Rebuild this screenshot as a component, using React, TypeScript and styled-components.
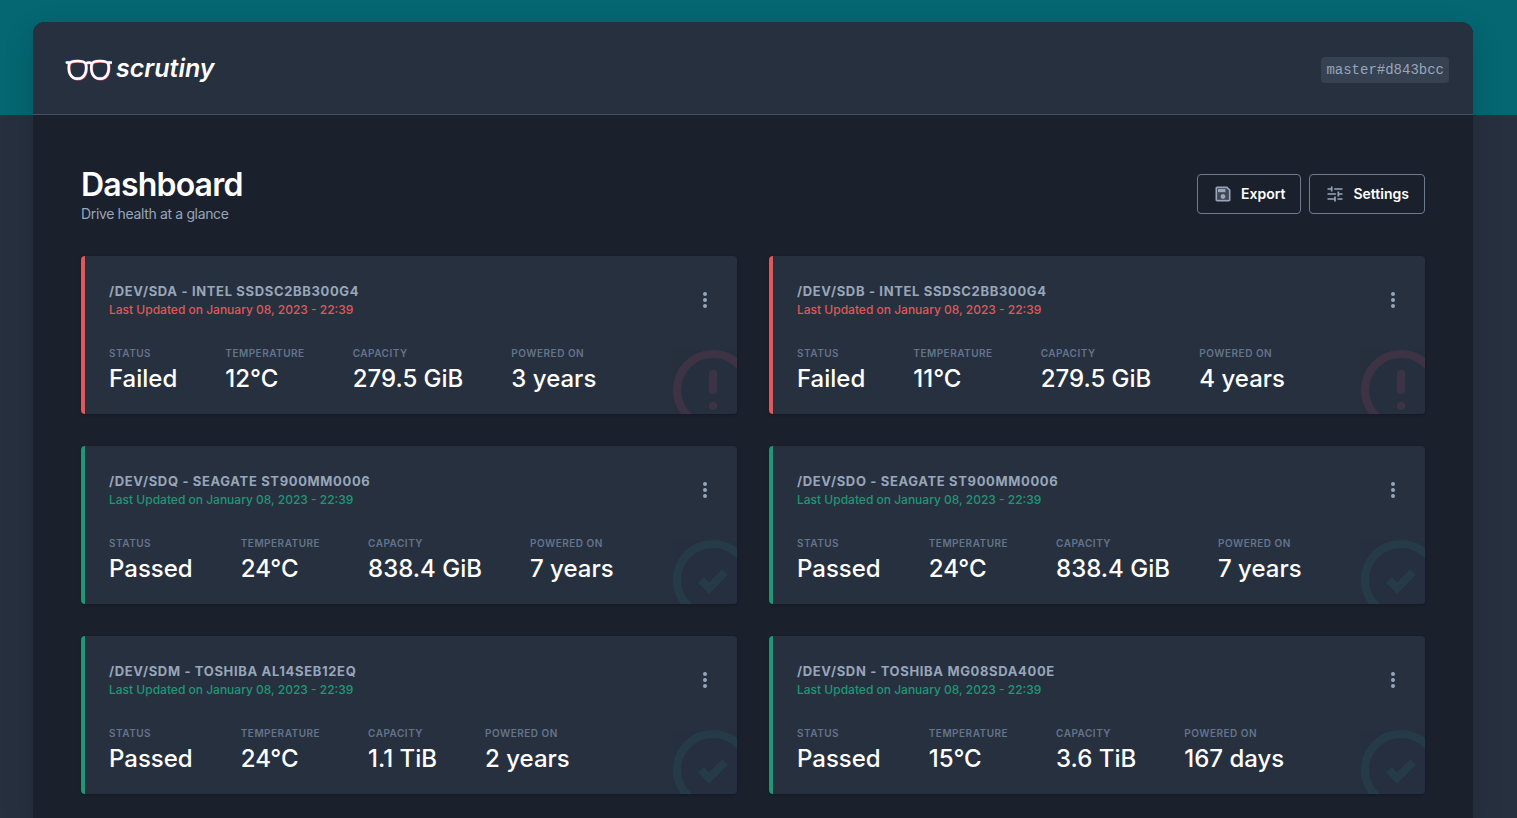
import React from "react";
import styled, { createGlobalStyle } from "styled-components";

const GlobalStyle = createGlobalStyle`
  *, *::before, *::after { box-sizing: border-box; }
  body {
    margin: 0;
    background: #27303f;
    color: #ffffff;
    font-family: Inter, "Liberation Sans", sans-serif;
    font-size: 14px;
    line-height: 20px;
  }
  h1, h2, p, dl, dt, dd { margin: 0; }
`;

const Page = styled.div`
  min-height: 100vh;
  padding: 22px 44px 0 33px;
  background: linear-gradient(#046772, #046772) top / 100% 115px no-repeat;
`;

const Shell = styled.div`
  display: flex;
  flex-direction: column;
  min-height: calc(100vh - 22px);
  border-radius: 12px 12px 0 0;
  background: #1a202c;
  box-shadow: 0 10px 30px rgba(0, 0, 0, 0.15);
`;

const TopBar = styled.header`
  display: flex;
  align-items: center;
  justify-content: space-between;
  height: 93px;
  padding: 0 24px 0 32px;
  border-bottom: 1px solid #475162;
  border-radius: 12px 12px 0 0;
  background: #27303f;
`;

const Brand = styled.a`
  display: flex;
  align-items: center;
  gap: 4px;
  color: #ffffff;
  font-size: 25px;
  font-style: italic;
  font-weight: 600;
  line-height: 32px;
  text-decoration: none;
`;

const Version = styled.code`
  margin-top: 4px;
  padding: 3px 5px;
  border-radius: 4px;
  background: #364152;
  color: #97a6ba;
  font-family: "Liberation Mono", monospace;
  font-size: 14px;
  line-height: 20px;
`;

const Main = styled.main`
  display: flex;
  flex-direction: column;
  gap: 32px;
  padding: 49px 48px 24px;
`;

const Heading = styled.div`
  display: flex;
  align-items: center;
  justify-content: space-between;
`;

const TitleBlock = styled.div`
  padding-top: 2px;
  letter-spacing: -0.025em;
`;

const Title = styled.h1`
  font-size: 32px;
  font-weight: 600;
  letter-spacing: -0.025em;
  line-height: 38px;
`;

const Subtitle = styled.p`
  color: #97a6ba;
`;

const Actions = styled.div`
  display: flex;
  gap: 8px;
`;

const ActionButton = styled.button`
  display: flex;
  align-items: center;
  gap: 8px;
  height: 40px;
  padding: 0 15px;
  border: 1px solid #6f7b8d;
  border-radius: 4px;
  background: transparent;
  color: #ffffff;
  font: 600 14px/20px Inter, sans-serif;

  svg { color: #97a6ba; }
`;

const Grid = styled.section`
  display: grid;
  grid-template-columns: repeat(2, minmax(0, 1fr));
  gap: 32px;
`;

const Card = styled.article<{ $failed: boolean }>`
  position: relative;
  overflow: hidden;
  height: 158px;
  padding: 25px 20px 17px 24px;
  border-left: 4px solid ${(p) => (p.$failed ? "#df585a" : "#1f9775")};
  border-radius: 4px;
  background: #27303f;
  box-shadow: 0 1px 3px rgba(0, 0, 0, 0.2);
`;

const CardHead = styled.div`
  display: flex;
  align-items: center;
  justify-content: space-between;
`;

const DriveName = styled.h2`
  color: #97a6ba;
  font-size: 13px;
  font-weight: 700;
  letter-spacing: 0.05em;
  line-height: 20px;
  text-transform: uppercase;
`;

const Updated = styled.p<{ $failed: boolean }>`
  color: ${(p) => (p.$failed ? "#df585a" : "#1f9775")};
  font-size: 12px;
  font-weight: 500;
  line-height: 18px;
`;

const MenuButton = styled.button`
  display: flex;
  padding: 0;
  border: 0;
  background: transparent;
  color: #97a6ba;
`;

const Stats = styled.dl`
  display: flex;
  gap: 48px;
  margin-top: 26px;
`;

const StatLabel = styled.dt`
  color: #64748b;
  font-size: 10px;
  font-weight: 600;
  letter-spacing: 0.05em;
  line-height: 16px;
  text-transform: uppercase;
`;

const StatValue = styled.dd`
  font-size: 24px;
  font-weight: 500;
  line-height: 36px;
`;

const Watermark = styled.svg<{ $failed: boolean }>`
  position: absolute;
  right: -24px;
  bottom: -24px;
  color: ${(p) => (p.$failed ? "#d8506e" : "#1f9d88")};
  opacity: ${(p) => (p.$failed ? 0.13 : 0.11)};
`;

type Drive = {
  name: string;
  status: "Failed" | "Passed";
  temperature: string;
  capacity: string;
  poweredOn: string;
};

const drives: Drive[] = [
  { name: "/dev/sda - Intel SSDSC2BB300G4", status: "Failed", temperature: "12°C", capacity: "279.5 GiB", poweredOn: "3 years" },
  { name: "/dev/sdb - Intel SSDSC2BB300G4", status: "Failed", temperature: "11°C", capacity: "279.5 GiB", poweredOn: "4 years" },
  { name: "/dev/sdq - Seagate ST900MM0006", status: "Passed", temperature: "24°C", capacity: "838.4 GiB", poweredOn: "7 years" },
  { name: "/dev/sdo - Seagate ST900MM0006", status: "Passed", temperature: "24°C", capacity: "838.4 GiB", poweredOn: "7 years" },
  { name: "/dev/sdm - Toshiba AL14SEB12EQ", status: "Passed", temperature: "24°C", capacity: "1.1 TiB", poweredOn: "2 years" },
  { name: "/dev/sdn - Toshiba MG08SDA400E", status: "Passed", temperature: "15°C", capacity: "3.6 TiB", poweredOn: "167 days" },
];

function Glasses() {
  const frame =
    "M1.800 6.500H4.500M43.300 6.500H46M4.200 8C5.500 4 19.500 4 20.800 8C22.300 16 19.500 22.600 12.500 22.600C5.500 22.600 2.700 16 4.200 8ZM26.700 8C28 4 42 4 43.300 8C44.800 16 42 22.600 35 22.600C28 22.600 25.200 16 26.700 8ZM20.800 7.500Q23.800 5.500 26.700 7.500";
  return (
    <svg width="47" height="26" viewBox="0 -1 47 26" fill="none" strokeWidth="2.6" strokeLinecap="round" aria-hidden="true">
      <path d={frame} stroke="#3f3fb0" transform="translate(-0.5 -0.5)" />
      <path d={frame} stroke="#e0565b" transform="translate(0.5 0.5)" />
      <path d={frame} stroke="#ffffff" />
    </svg>
  );
}

function SaveIcon() {
  return (
    <svg width="20" height="20" viewBox="0 0 24 24" fill="currentColor" aria-hidden="true">
      <path opacity="0.3" d="M5 5v14h14V7.830L16.170 5H5zm7 13c-1.660 0-3-1.340-3-3s1.340-3 3-3 3 1.340 3 3-1.340 3-3 3zm3-8H6V6h9v4z" />
      <path d="M17 3H5c-1.110 0-2 .9-2 2v14c0 1.100.89 2 2 2h14c1.100 0 2-.9 2-2V7l-4-4zm2 16H5V5h11.170L19 7.830V19zm-7-7c-1.660 0-3 1.340-3 3s1.340 3 3 3 3-1.340 3-3-1.340-3-3-3zM6 6h9v4H6z" />
    </svg>
  );
}

function TuneIcon() {
  return (
    <svg width="20" height="20" viewBox="0 0 24 24" fill="currentColor" aria-hidden="true">
      <path d="M3 5h4V3h2v6H7V7H3zM11 5h10v2H11zM3 11h10v2H3zM15 9h2v2h4v2h-4v2h-2zM3 17h8v-2h2v6h-2v-2H3zM15 17h6v2h-6z" />
    </svg>
  );
}

function DriveCard({ drive }: { drive: Drive }) {
  const failed = drive.status === "Failed";
  const stats = [
    ["Status", drive.status],
    ["Temperature", drive.temperature],
    ["Capacity", drive.capacity],
    ["Powered on", drive.poweredOn],
  ];
  return (
    <Card $failed={failed}>
      <Watermark $failed={failed} width="96" height="96" viewBox="0 0 24 24" fill="none" stroke="currentColor" strokeWidth="2" aria-hidden="true">
        <circle cx="12" cy="12" r="9" />
        {failed ? <path strokeLinecap="round" d="M12 8v4m0 4h.01" /> : <path d="M9 12l2 2 4-4" />}
      </Watermark>
      <CardHead>
        <div>
          <DriveName>{drive.name}</DriveName>
          <Updated $failed={failed}>Last Updated on January 08, 2023 - 22:39</Updated>
        </div>
        <MenuButton aria-label="Drive menu">
          <svg width="24" height="24" viewBox="0 0 24 24" fill="currentColor" aria-hidden="true">
            <circle cx="12" cy="6" r="2" />
            <circle cx="12" cy="12" r="2" />
            <circle cx="12" cy="18" r="2" />
          </svg>
        </MenuButton>
      </CardHead>
      <Stats>
        {stats.map(([label, value]) => (
          <div key={label}>
            <StatLabel>{label}</StatLabel>
            <StatValue>{value}</StatValue>
          </div>
        ))}
      </Stats>
    </Card>
  );
}

export default function App() {
  return (
    <>
      <GlobalStyle />
      <Page>
        <Shell>
          <TopBar>
            <Brand href="#">
              <Glasses />
              scrutiny
            </Brand>
            <Version>master#d843bcc</Version>
          </TopBar>
          <Main>
            <Heading>
              <TitleBlock>
                <Title>Dashboard</Title>
                <Subtitle>Drive health at a glance</Subtitle>
              </TitleBlock>
              <Actions>
                <ActionButton>
                  <SaveIcon />
                  Export
                </ActionButton>
                <ActionButton>
                  <TuneIcon />
                  Settings
                </ActionButton>
              </Actions>
            </Heading>
            <Grid>
              {drives.map((drive) => (
                <DriveCard key={drive.name} drive={drive} />
              ))}
            </Grid>
          </Main>
        </Shell>
      </Page>
    </>
  );
}
